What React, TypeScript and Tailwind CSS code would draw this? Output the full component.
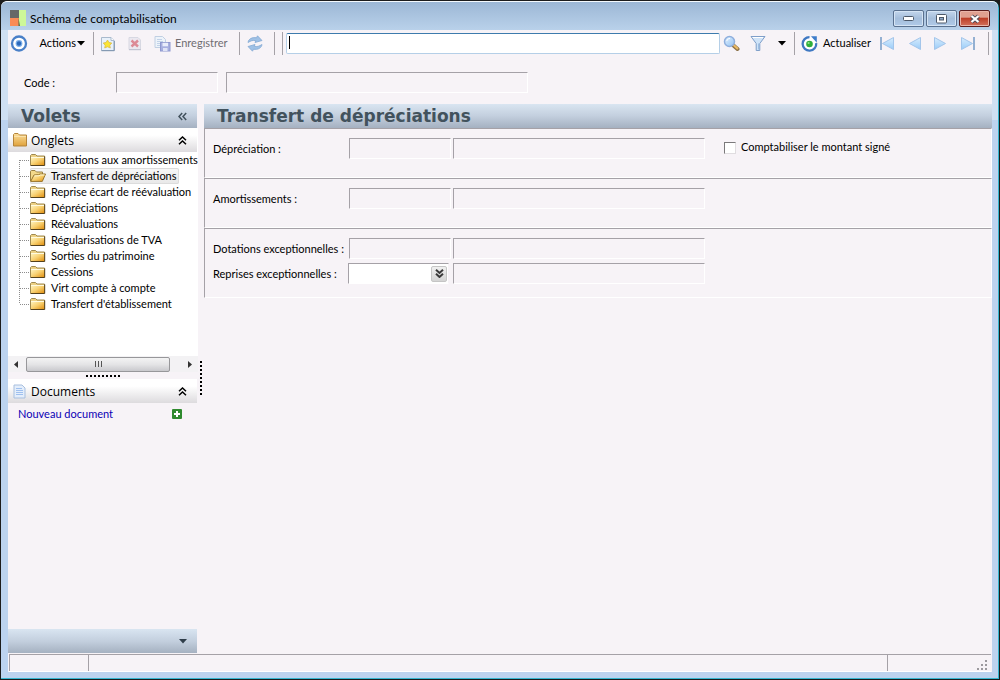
import React from 'react';

const folderNames = [
  'Dotations aux amortissements',
  'Transfert de dépréciations',
  'Reprise écart de réévaluation',
  'Dépréciations',
  'Réévaluations',
  'Régularisations de TVA',
  'Sorties du patrimoine',
  'Cessions',
  'Virt compte à compte',
  "Transfert d'établissement",
];

const barGradient = 'bg-linear-to-b from-[#d9e5f1] via-[#c3cfde] to-[#a5b1c1]';
const inset = 'border border-t-[#a5a1a7] border-l-[#a5a1a7] border-r-white border-b-white bg-transparent outline-none';

function Gradients() {
  return (
    <svg width="0" height="0" className="absolute" aria-hidden="true">
      <defs>
        <linearGradient id="folder" x1="0" y1="0" x2="1" y2="1">
          <stop offset="0" stopColor="#fff6c4" />
          <stop offset="0.5" stopColor="#f8d070" />
          <stop offset="1" stopColor="#e08f10" />
        </linearGradient>
        <linearGradient id="tab" x1="0" y1="0" x2="0" y2="1">
          <stop offset="0" stopColor="#fbdf9c" />
          <stop offset="1" stopColor="#e0a23c" />
        </linearGradient>
        <linearGradient id="sky" x1="0" y1="0" x2="1" y2="1">
          <stop offset="0" stopColor="#e6f2fd" />
          <stop offset="1" stopColor="#8fc0f3" />
        </linearGradient>
        <linearGradient id="arrow" x1="0" y1="0" x2="0" y2="1">
          <stop offset="0" stopColor="#d8ecfc" />
          <stop offset="1" stopColor="#9accf9" />
        </linearGradient>
      </defs>
    </svg>
  );
}

function FolderIcon() {
  return (
    <svg width="16" height="12" viewBox="0 0 16 12" className="shrink-0">
      <path d="M.5 11V1.500L1.500 .5H5.500L7 2H14.500V11Z" fill="#ecd084" stroke="#a08a50" />
      <rect x="1" y="3" width="13.500" height="8" fill="url(#folder)" />
      <path d="M.5 11.500H14.700V2.500" fill="none" stroke="#54411c" />
      <path d="M1 3.500H14" stroke="#fffbe0" />
    </svg>
  );
}

function OpenFolderIcon() {
  return (
    <svg width="16" height="12" viewBox="0 0 16 12" className="shrink-0">
      <path d="M.5 11V1.500L1.500 .5H5L6.500 2H12.500V4.500" fill="#f3d98a" stroke="#9b8143" />
      <path d="M.7 11.400L4 5L8.500 4.700L10 4H15.500L12.300 11.400Z" fill="url(#folder)" stroke="#96732b" />
      <path d="M4.500 5.800H9L10.500 5H14.500" fill="none" stroke="#fff8d0" />
    </svg>
  );
}

function DoubleChevron({ down = false }: { down?: boolean }) {
  return (
    <svg width="9" height="9" viewBox="0 0 9 9" className={down ? 'rotate-180' : ''}>
      <path d="M1 4.200L4.500 1L8 4.200M1 8.200L4.500 5L8 8.200" fill="none" stroke="currentColor" strokeWidth={down ? 2 : 1.500} />
    </svg>
  );
}

function Separator() {
  return <div className="h-[23px] w-px shrink-0 bg-[#a5a1a7]" />;
}

function TargetIcon() {
  return (
    <svg width="18" height="18" viewBox="0 0 18 18">
      <circle cx="9" cy="8.500" r="7" fill="#fff" stroke="#4a80c8" strokeWidth="2.300" />
      <circle cx="9" cy="8.500" r="3.400" fill="#7eb0ea" />
      <circle cx="9" cy="8.500" r="2.200" fill="#2a68bb" />
    </svg>
  );
}

function NewIcon() {
  return (
    <svg width="16" height="16" viewBox="0 0 16 16">
      <path d="M1.500 1.500H11L14 4.500V14.500H1.500Z" fill="#e8f1fa" stroke="#a9bacd" />
      <path d="M11 1.500V4.500H14" fill="#fff" stroke="#a9bacd" />
      <path d="M1.500 14.700H14.300V5" fill="none" stroke="#7d93ad" />
      <path d="M7.500 4L9 6.500L11.800 7L9.800 9.200L10.300 12L7.500 10.800L4.700 12L5.200 9.200L3.200 7L6 6.500Z" fill="#fbe532" stroke="#d8b440" strokeWidth=".7" />
    </svg>
  );
}

function DeleteIcon() {
  return (
    <svg width="14" height="15" viewBox="0 0 14 15" opacity=".75">
      <path d="M1 1.500H10L12.500 4V13.500H1Z" fill="#e6e5ee" stroke="#cdcfdb" />
      <path d="M1 13.700H13" stroke="#a9aec2" />
      <path d="M3.500 4.500L10 10.500M10 4.500L3.500 10.500" stroke="#d46876" strokeWidth="2.400" />
    </svg>
  );
}

function SaveIcon() {
  return (
    <svg width="17" height="17" viewBox="0 0 17 17" className="shrink-0">
      <path d="M1 1.500H8.500L11.500 4.500V12.500H1Z" fill="#edf3fa" stroke="#c0cfe2" />
      <path d="M3 4.500H8M3 6.500H9M3 8.500H7M3 10.500H6" stroke="#c2d2e8" />
      <rect x="6.500" y="7.500" width="9.500" height="8.500" fill="#a7afe0" stroke="#8e98cf" />
      <rect x="8.500" y="7.800" width="5.500" height="3.500" fill="#e9edfb" />
      <rect x="9" y="13" width="4.500" height="3" fill="#dfe3f6" />
    </svg>
  );
}

function SyncIcon() {
  return (
    <svg width="18" height="17" viewBox="0 0 18 17">
      <path d="M2 7.500C2.500 4 6 2 10.500 2.800L11.500 .8L16 5.500L9 7.500L9.800 5.700C6.500 5 5 5.800 2 7.500Z" fill="#9fc1e6" stroke="#84a9d3" strokeWidth=".8" />
      <path d="M16 9.500C15.500 13 12 15 7.500 14.200L6.500 16.200L2 11.500L9 9.500L8.200 11.300C11.500 12 13 11.200 16 9.500Z" fill="#9fc1e6" stroke="#84a9d3" strokeWidth=".8" />
    </svg>
  );
}

function SearchIcon() {
  return (
    <svg width="17" height="17" viewBox="0 0 17 17">
      <path d="M10.500 10.500L14.500 14" stroke="#8a6f45" strokeWidth="4" strokeLinecap="round" />
      <path d="M10.500 10L14.300 13.400" stroke="#e8b965" strokeWidth="2.200" strokeLinecap="round" />
      <circle cx="6.500" cy="6.500" r="5" fill="url(#sky)" stroke="#8fafdd" strokeWidth="1.500" />
      <path d="M3.800 6C4.200 4.200 5.500 3.500 7 3.500" fill="none" stroke="#fff" />
    </svg>
  );
}

function FilterIcon() {
  return (
    <svg width="16" height="17" viewBox="0 0 16 17">
      <path d="M1 1.500H15L9.800 8.500V15.500H6.200V8.500Z" fill="#cfe3f8" stroke="#7f9fc9" />
      <path d="M2.500 2.500H13" stroke="#fff" />
      <path d="M8.500 8.500V14.500" stroke="#9dbfe4" />
    </svg>
  );
}

function RefreshIcon() {
  return (
    <svg width="18" height="18" viewBox="0 0 18 18" className="shrink-0">
      <circle cx="8.500" cy="9" r="6.700" fill="#fff" />
      <path d="M8.500 2.100A6.800 6.800 0 1 0 15.200 8.200" fill="none" stroke="#3f78c2" strokeWidth="2.300" />
      <path d="M10 1.200H15.800V7.700Z" fill="#3e7dca" />
      <circle cx="8.500" cy="9" r="3.300" fill="#2fae3c" />
      <circle cx="7.600" cy="8" r="1.100" fill="#8fe08a" />
    </svg>
  );
}

function NavIcon({ left = false, bar = false }: { left?: boolean; bar?: boolean }) {
  return (
    <svg width="16" height="15" viewBox="0 0 16 15">
      <g transform={left ? 'matrix(-1 0 0 1 16 0)' : undefined}>
        <path d="M1.500 1.500L12.500 7.500L1.500 13.500Z" fill="url(#arrow)" stroke="#a3c5ea" />
        {bar && <path d="M14 1V14" stroke="#94b0d2" strokeWidth="2" />}
      </g>
    </svg>
  );
}

function CaretIcon() {
  return (
    <svg width="8" height="5" viewBox="0 0 8 5" className="shrink-0">
      <path d="M0 0H8L4 4.500Z" fill="currentColor" />
    </svg>
  );
}

function TitleBar() {
  const glass = 'flex h-[17px] w-[31px] items-center justify-center rounded-[2px] border border-[#5a718f] bg-linear-to-b from-[#c3d6ec] via-[#a5bedb] to-[#b0cae8] shadow-[inset_0_0_0_1px_#d5e4f4]';
  return (
    <header className="flex h-[29px] shrink-0 items-start rounded-t-[6px] border-t border-[#f4f9fd] bg-linear-to-b from-[#9cb7d5] to-[#b9d1ea] pr-2 pl-[9px]">
      <svg width="17" height="17" viewBox="0 0 17 17" className="mt-2 shrink-0">
        <rect width="9" height="8" fill="#666867" />
        <rect y="8" width="9" height="8" fill="#f98b56" />
        <rect x="9" width="7" height="16" fill="#cdf798" />
        <path d="M8.500 8L10 16H8.500Z" fill="#54684a" />
      </svg>
      <h1 className="mt-2 ml-[3px] flex-1 font-[Lato,sans-serif] text-[12px] leading-[17px]">Schéma de comptabilisation</h1>
      <div className="mt-2 flex gap-[2px]">
        <button aria-label="Réduire" className={glass}>
          <svg width="12" height="6"><rect x=".5" y=".5" width="10" height="4" rx="1" fill="#fff" stroke="#4c5868" /></svg>
        </button>
        <button aria-label="Agrandir" className={glass}>
          <svg width="11" height="10"><rect x=".5" y=".5" width="10" height="8.500" rx="1" fill="#fff" stroke="#4c5868" /><rect x="3.500" y="3.500" width="4" height="2.500" fill="#8fa9c8" stroke="#4c5868" /></svg>
        </button>
        <button aria-label="Fermer" className="flex h-[17px] w-[31px] items-center justify-center rounded-[2px] border border-[#5a1c1c] bg-linear-to-b from-[#e0a090] from-40% via-[#bd3f28] via-50% to-[#d3715c] shadow-[inset_0_0_0_1px_#e9b4a8]">
          <svg width="12" height="10" viewBox="0 0 12 10"><path d="M2.500 2L9.500 8M9.500 2L2.500 8" stroke="#4e4a57" strokeWidth="4" /><path d="M2.500 2L9.500 8M9.500 2L2.500 8" stroke="#fff" strokeWidth="2.300" /></svg>
        </button>
      </div>
    </header>
  );
}

function Toolbar() {
  return (
    <div className="flex h-[33px] items-start pt-0.5 pr-[3px]">
      <div className="flex h-[23px] flex-1 items-center">
        <button aria-label="Menu" className="ml-0.5"><TargetIcon /></button>
        <button className="flex w-[57px] items-center justify-end gap-px">Actions <CaretIcon /></button>
        <div className="ml-2 flex"><Separator /></div>
        <button aria-label="Nouveau" className="ml-1.5"><NewIcon /></button>
        <button aria-label="Supprimer" className="ml-3"><DeleteIcon /></button>
        <button className="ml-3 flex w-[75px] items-center gap-1 text-[#6f6d72]"><SaveIcon />Enregistrer</button>
        <div className="ml-2.5 flex"><Separator /></div>
        <button aria-label="Synchroniser" className="ml-1.5"><SyncIcon /></button>
        <div className="ml-2.5 flex gap-[7px]"><Separator /><Separator /></div>
        <div className="relative ml-[3px] flex min-w-0 flex-1">
          <input aria-label="Recherche" className="h-[21px] min-w-0 flex-1 rounded-[2px] border border-[#b5cfe7] border-t-[#3d7bad] bg-white px-1 outline-none" />
          <span className="absolute top-[3px] left-[3px] h-[13px] w-px bg-black" />
        </div>
        <button aria-label="Rechercher" className="ml-[3px]"><SearchIcon /></button>
        <button aria-label="Filtrer" className="ml-2.5"><FilterIcon /></button>
        <button aria-label="Options du filtre" className="ml-3"><CaretIcon /></button>
        <div className="ml-2 flex"><Separator /></div>
        <button className="ml-1.5 flex w-[68px] items-center gap-1"><RefreshIcon />Actualiser</button>
        <div className="ml-2.5 flex gap-[11px]">
          <button aria-label="Premier"><NavIcon left bar /></button>
          <button aria-label="Précédent"><NavIcon left /></button>
          <button aria-label="Suivant"><NavIcon /></button>
          <button aria-label="Dernier"><NavIcon bar /></button>
        </div>
        <div className="ml-3 flex"><Separator /></div>
      </div>
    </div>
  );
}

function SectionHead({ icon, title }: { icon: React.ReactNode; title: string }) {
  return (
    <div className="flex h-6 items-center bg-linear-to-b from-white from-30% to-[#dddbde] pr-2.5 pl-1">
      {icon}
      <h3 className="ml-1 flex-1 pt-px font-[Open_Sans,sans-serif] text-[12px]">{title}</h3>
      <button aria-label={`Réduire ${title}`}><DoubleChevron /></button>
    </div>
  );
}

function Sidebar() {
  return (
    <aside className="flex w-[190px] shrink-0 flex-col">
      <div className={`mr-px flex h-6 shrink-0 items-center pr-2.5 pl-[13px] text-[#42525d] ${barGradient}`}>
        <h2 className="flex-1 font-[DejaVu_Sans,sans-serif] text-[17px] leading-6 font-bold">Volets</h2>
        <button aria-label="Masquer les volets" className="-rotate-90"><DoubleChevron /></button>
      </div>
      <div className="bg-white">
        <div className="mr-px">
          <SectionHead
            title="Onglets"
            icon={
              <svg width="15" height="14" viewBox="0 0 15 14">
                <path d="M1.500 13V1.500L2.500 .5H6L7.500 2H14.500V13Z" fill="url(#tab)" stroke="#b5853b" />
                <path d="M2 3.500H14" stroke="#fbe3ab" />
              </svg>
            }
          />
        </div>
        <ul className="h-[204px] overflow-hidden pl-[11px]">
          {folderNames.map((name, i) => (
            <li key={name} className="flex h-4 items-stretch whitespace-nowrap">
              <svg width="11" height="16" className="shrink-0 text-[#8c8c8c]">
                <path d={`M.5 ${i === 0 ? 8 : 0}V${i === folderNames.length - 1 ? 8 : 16}M1 8.500H11`} fill="none" stroke="currentColor" strokeDasharray="1 1" />
              </svg>
              <a href="#" className={`flex items-center rounded-[2px] ${i === 1 ? 'bg-linear-to-b from-[#f8f8f8] to-[#e8e8e8] shadow-[inset_0_0_0_1px_#dcdcdc]' : ''}`}>
                {i === 1 ? <OpenFolderIcon /> : <FolderIcon />}
                <span className="pr-[2px] pl-[5px]">{name}</span>
              </a>
            </li>
          ))}
        </ul>
      </div>
      <div className="flex h-4 shrink-0 items-center justify-between bg-[#f3f2f4] pr-1.5 pl-1.5">
        <svg width="4" height="7"><path d="M4 0V7L0 3.500Z" fill="#333" /></svg>
        <div className="mr-[18px] ml-2 flex h-[15px] flex-1 items-center justify-center gap-[2px] rounded-[2px] border border-[#97979a] bg-linear-to-b from-[#f4f4f4] via-[#e4e4e6] to-[#c9c9cd]">
          <i className="h-1.5 w-px bg-[#555]" /><i className="h-1.5 w-px bg-[#555]" /><i className="h-1.5 w-px bg-[#555]" />
        </div>
        <svg width="4" height="7"><path d="M0 0V7L4 3.500Z" fill="#333" /></svg>
      </div>
      <div className="flex h-[7px] shrink-0 items-center justify-center">
        <svg width="35" height="2"><path d="M0 1H35" stroke="#000" strokeWidth="2" strokeDasharray="2 2" /></svg>
      </div>
      <div className="mr-px">
        <SectionHead
          title="Documents"
          icon={
            <svg width="15" height="15" viewBox="0 0 15 15">
              <path d="M2 1H10L13 4V14H2Z" fill="#e4eefb" stroke="#a8bfde" />
              <path d="M4 4.500H10M4 6.500H11M4 8.500H11M4 10.500H11" stroke="#9fc0ef" />
            </svg>
          }
        />
      </div>
      <a href="#" className="flex h-[22px] shrink-0 items-center justify-between pr-4 pl-2.5 text-[#0b00b5]">
        Nouveau document
        <svg width="10" height="10" viewBox="0 0 10 10">
          <rect width="10" height="10" rx="1" fill="#2f8a2e" />
          <path d="M5 2V8M2 5H8" stroke="#fff" strokeWidth="2" />
        </svg>
      </a>
      <div className={`mt-auto mr-px flex h-6 shrink-0 items-center justify-end pr-2.5 text-[#2f3d49] ${barGradient}`}>
        <button aria-label="Plus de volets"><CaretIcon /></button>
      </div>
    </aside>
  );
}

function Field({ id, label, lookup = false, children }: { id: string; label: string; lookup?: boolean; children?: React.ReactNode }) {
  return (
    <div className="flex h-[25px] items-start">
      <label htmlFor={id} className="w-[136px] pt-0.5 leading-[18px] whitespace-nowrap">{label}</label>
      {lookup ? (
        <div className="mr-1 -ml-px flex h-[21px] w-[101px] items-center border border-t-[#a5a1a7] border-r-[#f7f3f7] border-b-white border-l-[#a5a1a7] bg-white pr-px">
          <input id={id} className="h-full min-w-0 flex-1 outline-none" />
          <button aria-label="Choisir" className="flex h-4 w-4 items-center justify-center rounded-[2px] border border-[#c5c5c5] bg-linear-to-b from-[#f0f0f0] to-[#d4d4d4] text-[#3a3a3a]"><DoubleChevron down /></button>
        </div>
      ) : (
        <input id={id} disabled className={`mr-[2px] h-[21px] w-[102px] ${inset}`} />
      )}
      <input aria-label={`${label} libellé`} disabled className={`h-[21px] w-[252px] ${inset}`} />
      {children}
    </div>
  );
}

function Panel({ children, className = '' }: { children: React.ReactNode; className?: string }) {
  return (
    <section className={`border border-t-[#a5a1a7] border-r-white border-b-white border-l-[#a5a1a7] pl-2 ${className}`}>{children}</section>
  );
}

export default function App() {
  return (
    <div className="h-screen bg-[#1c1c1c] p-px font-[Lato,sans-serif] text-[11px] text-black">
      <Gradients />
      <div className="flex h-full flex-col rounded-t-[7px] border-r border-b border-[#35b5cf] bg-linear-to-b from-[#cfe0f2] from-[119px] to-[#bcd3ef] to-[119px]">
        <TitleBar />
        <div className="mr-1.5 mb-1.5 ml-[7px] flex min-h-0 flex-1 flex-col bg-[#f7f3f7]">
          <Toolbar />
          <div className="flex h-[41px] shrink-0 items-start pt-[9px] pl-4">
            <label htmlFor="code" className="w-[92px] pt-0.5 leading-[18px]">Code :</label>
            <input id="code" disabled className={`mr-2 h-[21px] w-[102px] ${inset}`} />
            <input aria-label="Libellé du code" disabled className={`h-[21px] w-[302px] ${inset}`} />
          </div>
          <div className="flex min-h-0 flex-1">
            <Sidebar />
            <div className="flex w-[6px] shrink-0 items-start pt-[257px] pl-0.5">
              <svg width="2" height="35"><path d="M1 0V35" stroke="#000" strokeWidth="2" strokeDasharray="2 2" /></svg>
            </div>
            <main className="min-w-0 flex-1">
              <h2 className={`h-6 pl-[13px] font-[DejaVu_Sans,sans-serif] text-[17px] leading-6 font-bold text-[#42525d] ${barGradient}`}>Transfert de dépréciations</h2>
              <Panel className="h-[50px] pt-[9px]">
                <Field id="depreciation" label="Dépréciation :">
                  <label className="ml-[19px] flex h-[19px] items-center gap-[5px]">
                    <input type="checkbox" className="h-3 w-3 appearance-none border border-t-[#7b797b] border-r-[#e0dde0] border-b-[#e0dde0] border-l-[#7b797b] bg-white" />
                    Comptabiliser le montant signé
                  </label>
                </Field>
              </Panel>
              <Panel className="h-[50px] pt-[9px]">
                <Field id="amortissements" label="Amortissements :" />
              </Panel>
              <Panel className="h-[70px] pt-[9px]">
                <Field id="dotations" label="Dotations exceptionnelles :" />
                <Field id="reprises" label="Reprises exceptionnelles :" lookup />
              </Panel>
            </main>
          </div>
          <footer className="mt-px mr-px ml-px flex h-[18px] shrink-0 border-b border-white">
            <div className="w-[79px] border-t border-l border-[#a5a1a7]" />
            <div className="flex-1 border-t border-l border-[#a5a1a7]" />
            <div className="flex w-[104px] items-end justify-end border-t border-l border-[#a5a1a7] pr-1 pb-px">
              <svg width="10" height="10" fill="#9c999e">
                <path d="M8 0h2v2h-2zM4 4h2v2h-2zM8 4h2v2h-2zM0 8h2v2h-2zM4 8h2v2h-2zM8 8h2v2h-2z" />
              </svg>
            </div>
          </footer>
        </div>
      </div>
    </div>
  );
}
